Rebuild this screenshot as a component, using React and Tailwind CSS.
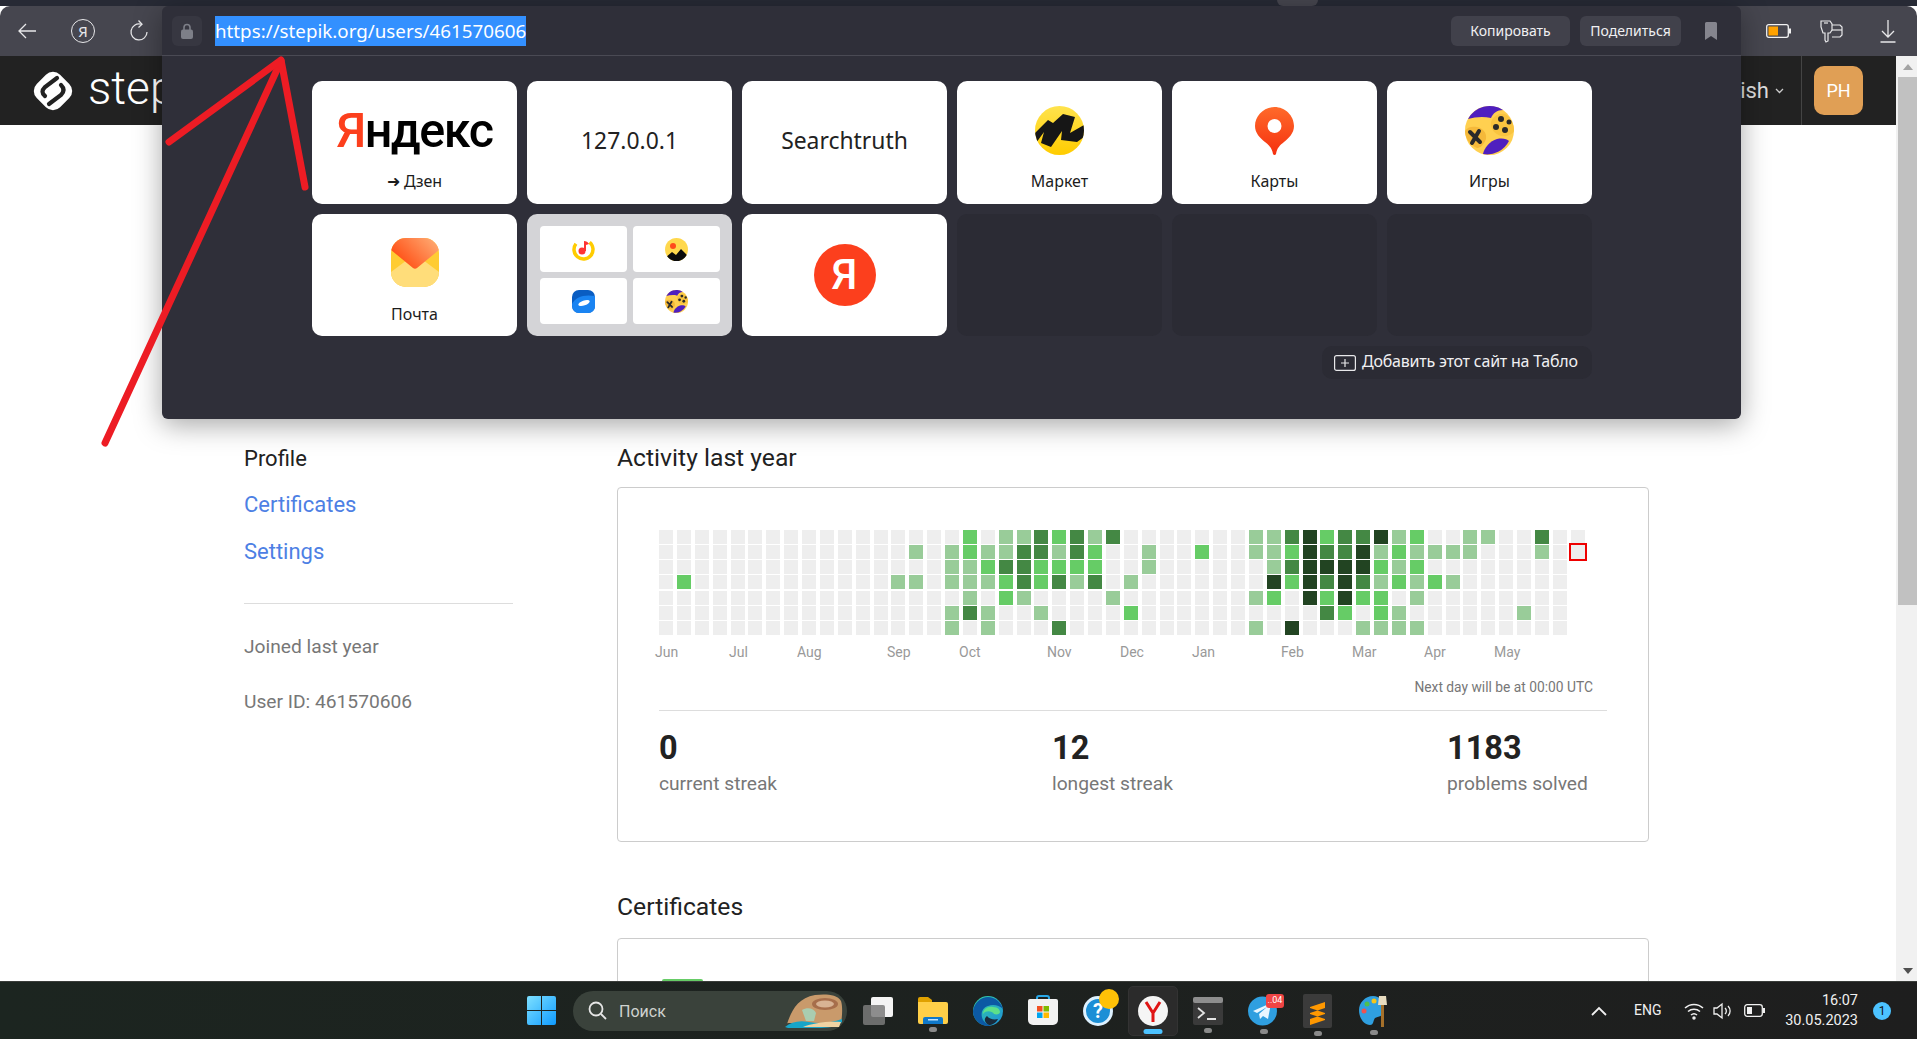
const roboto = "font-['Roboto',sans-serif]";

const LEVELS = ["bg-[#eeeeee]", "bg-[#99cc99]", "bg-[#66cc66]", "bg-[#448844]", "bg-[#224422]"];

// activity per weekday row: column index -> level
const ACTIVITY = [
  { 17: 2, 19: 1, 20: 1, 21: 3, 22: 2, 23: 3, 24: 1, 25: 3, 33: 1, 34: 1, 35: 3, 36: 4, 37: 2, 38: 3, 39: 3, 40: 4, 41: 1, 42: 2, 45: 1, 46: 1, 49: 3 },
  { 14: 1, 16: 1, 17: 2, 18: 1, 19: 1, 20: 3, 21: 3, 22: 1, 23: 3, 24: 2, 27: 1, 30: 2, 33: 1, 34: 1, 35: 2, 36: 4, 37: 3, 38: 3, 39: 4, 40: 1, 41: 2, 42: 1, 43: 1, 44: 1, 45: 1, 49: 1 },
  { 16: 1, 17: 1, 18: 2, 19: 3, 20: 3, 21: 2, 22: 2, 23: 2, 24: 2, 27: 1, 34: 1, 35: 3, 36: 4, 37: 4, 38: 4, 39: 4, 40: 2, 41: 1, 42: 2 },
  { 1: 2, 13: 1, 14: 1, 16: 1, 17: 1, 18: 1, 19: 2, 20: 3, 21: 2, 22: 3, 23: 1, 24: 3, 26: 1, 34: 4, 35: 2, 36: 4, 37: 3, 38: 4, 39: 3, 40: 1, 41: 2, 42: 1, 43: 2, 44: 1 },
  { 17: 1, 19: 2, 20: 1, 25: 1, 33: 1, 34: 2, 36: 4, 37: 2, 38: 4, 39: 2, 40: 2, 42: 1 },
  { 16: 1, 17: 3, 18: 1, 21: 1, 26: 2, 37: 3, 38: 2, 40: 2, 41: 1, 48: 1 },
  { 16: 1, 18: 1, 22: 3, 33: 1, 35: 4, 39: 1, 40: 1, 41: 1, 42: 1 },
];

const MONTHS = [
  ["Jun", "w-[74px]"], ["Jul", "w-[68px]"], ["Aug", "w-[90px]"], ["Sep", "w-[72px]"],
  ["Oct", "w-[88px]"], ["Nov", "w-[73px]"], ["Dec", "w-[72px]"], ["Jan", "w-[89px]"],
  ["Feb", "w-[71px]"], ["Mar", "w-[72px]"], ["Apr", "w-[70px]"], ["May", "w-[60px]"],
];

function Heatmap() {
  const cells = [];
  for (let col = 0; col < 52; col++) {
    for (let row = 0; row < 7; row++) {
      if (col === 51 && row > 1) continue;
      const today = col === 51 && row === 1;
      cells.push(
        <div
          key={col + "-" + row}
          className={`h-[14px] w-[14px] ${LEVELS[ACTIVITY[row][col] || 0]} ${today ? "outline-2 outline-[#ee0000]" : ""}`}
        />
      );
    }
  }
  return (
    <div className="grid h-[105px] w-[926px] grid-flow-col grid-cols-[repeat(52,14px)] grid-rows-[repeat(7,14px)] content-between justify-between">
      {cells}
    </div>
  );
}

function ArrowLeftIcon() {
  return (
    <svg width="20" height="18" viewBox="0 0 20 18" fill="none" stroke="#e8e8ea" strokeWidth="1.3">
      <path d="M19 9H2M9 2 2 9l7 7" />
    </svg>
  );
}

function BrowserYandexIcon() {
  return (
    <div className="flex h-[24px] w-[24px] items-center justify-center rounded-full border border-[#e8e8ea] font-['Noto_Sans',sans-serif] text-[15px] leading-none text-[#e8e8ea]">
      Я
    </div>
  );
}

function ReloadIcon() {
  return (
    <svg width="20" height="24" viewBox="0 0 20 24" fill="none" stroke="#e8e8ea" strokeWidth="1.3">
      <path d="M12 5.2a8 8 0 1 0 6 7.8" />
      <path d="M9.5 1.5 13 5.2 9.5 8.5" />
    </svg>
  );
}

function BatteryOrange() {
  return (
    <svg width="25" height="14" viewBox="0 0 25 14">
      <rect x="0.7" y="0.7" width="21.6" height="12.6" rx="2" fill="none" stroke="#f2f2f2" strokeWidth="1.3" />
      <rect x="2.5" y="2.5" width="9.5" height="9" fill="#ffa200" />
      <rect x="23" y="4.5" width="2" height="5" fill="#f2f2f2" />
    </svg>
  );
}

function ExtensionIcon() {
  return (
    <svg width="23" height="24" viewBox="0 0 23 24" fill="none" stroke="#e8e8ea" strokeWidth="1.2">
      <path d="M1 2h9l2 3v6l-2 3H8v8l-2 1-1-2v-7H3L1 8z" />
      <path d="M4 4h4" />
      <path d="M12 6h8l2 2v8l-2 2h-8" />
      <path d="M12 11h10" />
    </svg>
  );
}

function DownloadIcon() {
  return (
    <svg width="16" height="24" viewBox="0 0 16 24" fill="none" stroke="#e8e8ea" strokeWidth="1.3">
      <path d="M8 1v17M2 12l6 6 6-6M0.5 23h15" />
    </svg>
  );
}

function StepikLogo() {
  return (
    <svg width="46" height="46" viewBox="0 0 46 46">
      <rect x="6.5" y="6.5" width="33" height="33" rx="10" fill="#fff" transform="rotate(45 23 23)" />
      <g fill="none" stroke="#222" strokeWidth="4.200" strokeLinecap="round">
        <path d="M27 10 15 19q-5 5 0 9" />
        <path d="M31 17q5 5 0 10L19 36" />
      </g>
    </svg>
  );
}

function LockIcon() {
  return (
    <svg width="12" height="16" viewBox="0 0 12 16">
      <path d="M3 7V4.5a3 3 0 0 1 6 0V7" fill="none" stroke="#7d7f88" strokeWidth="1.6" />
      <rect x="0" y="6.5" width="12" height="9.5" rx="2" fill="#7d7f88" />
    </svg>
  );
}

function BookmarkIcon() {
  return (
    <svg width="12" height="18" viewBox="0 0 12 18">
      <path d="M0 1.5A1.5 1.5 0 0 1 1.5 0h9A1.5 1.5 0 0 1 12 1.5V18l-6-4-6 4z" fill="#85858e" />
    </svg>
  );
}

function MarketIcon() {
  return (
    <svg width="49" height="49" viewBox="0 0 49 49">
      <defs>
        <linearGradient id="mk" x1="0" y1="0" x2="0" y2="1">
          <stop offset="0" stopColor="#ffe34d" />
          <stop offset="1" stopColor="#ffcc00" />
        </linearGradient>
        <clipPath id="mkc"><circle cx="24.5" cy="24.5" r="24.5" /></clipPath>
      </defs>
      <circle cx="24.5" cy="24.5" r="24.5" fill="url(#mk)" />
      <path
        d="M0 27 13 14l5 3L28 8l12 3-5 16 14-8v12l-7 5-16-2 1-9-11 16-10-4 3-11-8 11-6-6z"
        fill="#161616"
        clipPath="url(#mkc)"
      />
    </svg>
  );
}

function MapsIcon() {
  return (
    <svg width="39" height="48" viewBox="0 0 39 48">
      <defs>
        <linearGradient id="mp" x1="0" y1="0" x2="0" y2="1">
          <stop offset="0" stopColor="#ff6a2a" />
          <stop offset="1" stopColor="#f5300f" />
        </linearGradient>
      </defs>
      <path d="M19.500 0C30 0 39 8.500 39 19c0 7-5 12-10 16-4 3-7 6-8 12-.5 1.300-2.500 1.300-3 0-1-6-4-9-8-12C5 31 0 26 0 19 0 8.500 9 0 19.500 0z" fill="url(#mp)" />
      <circle cx="19.500" cy="19" r="7" fill="#fff" />
    </svg>
  );
}

function GamesIcon({ size = 49 }) {
  return (
    <svg width={size} height={size} viewBox="0 0 49 49">
      <circle cx="24.5" cy="24.5" r="24.500" fill="#ffd050" />
      <path d="M3 13A24.500 24.500 0 0 1 38 4c-6 0-10 3-12 8-8-2-16-1-23 1z" fill="#4f1fbf" />
      <path d="M18 48c1-6 7-13 14-15 6-1 10 0 12 2a24.500 24.500 0 0 1-26 13z" fill="#4f1fbf" />
      <path d="M0 25c2-4 7-5 12-4 6 1 10 6 9 12-2 5-5 9-9 9C5 39 0 32 0 25z" fill="#f5b93a" />
      <path d="M26 16c2-6 8-9 14-8 6 4 9 10 9 17-2 4-8 6-13 5-7-2-11-8-10-14z" fill="#f9c440" />
      <path d="M5 26l10 10M14 25 7 37" stroke="#2a2a2a" strokeWidth="4" strokeLinecap="round" />
      <g fill="#2a2a2a">
        <circle cx="36" cy="13" r="3" />
        <circle cx="31" cy="21" r="3" />
        <circle cx="40" cy="24" r="3" />
        <circle cx="44" cy="16" r="2.500" />
      </g>
    </svg>
  );
}

function MailIcon() {
  return (
    <svg width="48" height="49" viewBox="0 0 48 49">
      <defs>
        <linearGradient id="ml" x1="0" y1="0.6" x2="1" y2="0">
          <stop offset="0" stopColor="#ff4a10" />
          <stop offset="1" stopColor="#ffb27a" />
        </linearGradient>
        <clipPath id="mlc"><rect width="48" height="49" rx="15" /></clipPath>
      </defs>
      <g clipPath="url(#mlc)">
        <rect width="48" height="49" fill="#ffcc33" />
        <path d="M0 49V34l16-12h16l16 12v15z" fill="#ffdd7a" />
        <path d="M0 0h48v12L26 30c-1 1-3 1-4 0L0 12z" fill="url(#ml)" />
      </g>
    </svg>
  );
}

function MusicIcon() {
  return (
    <svg width="23" height="23" viewBox="0 0 23 23">
      <circle cx="11.500" cy="11.500" r="9.500" fill="none" stroke="#ffcc00" strokeWidth="3.500" strokeDasharray="44 16" transform="rotate(-50 11.500 11.500)" />
      <circle cx="10" cy="13" r="3.500" fill="#f33" />
      <path d="M12 13V3c2 0 4 1 5 3l-3 1v6z" fill="#f33" />
    </svg>
  );
}

function PhotoIcon() {
  return (
    <svg width="23" height="23" viewBox="0 0 23 23">
      <defs>
        <clipPath id="ph"><circle cx="11.500" cy="11.500" r="11.500" /></clipPath>
      </defs>
      <g clipPath="url(#ph)">
        <rect width="23" height="23" fill="#ffd84d" />
        <circle cx="8" cy="8" r="3" fill="#ff4a1c" />
        <path d="M0 20l7-6 4 3 5-6 8 8v5H0z" fill="#0c0c0c" />
      </g>
    </svg>
  );
}

function DiskIcon() {
  return (
    <svg width="23" height="23" viewBox="0 0 23 23">
      <rect width="23" height="23" rx="7" fill="#0a5dc2" />
      <path d="M0 14C3 7 12 4 23 6v10c0 4-3 7-7 7H7c-4 0-7-3-7-9z" fill="#1a84f2" />
      <ellipse cx="12" cy="13" rx="6" ry="2.500" transform="rotate(-20 12 13)" fill="#fff" />
    </svg>
  );
}

function Tile({ icon, label }) {
  return (
    <div className="flex h-[123px] flex-col items-center rounded-[10px] bg-white pt-[25px]">
      <div className="flex h-[49px] items-center justify-center">{icon}</div>
      <div className="mt-[16px] text-[16px] leading-5 text-[#1c1c1c]">{label}</div>
    </div>
  );
}

function Popup() {
  const subtile = "flex h-[46px] w-[87px] items-center justify-center rounded-[4px] bg-white";
  return (
    <div className="absolute left-[162px] top-[6px] h-[413px] w-[1579px] rounded-[6px] bg-[#2f2f39] font-['Noto_Sans',sans-serif] shadow-[0_6px_28px_rgba(0,0,0,0.35)]">
      <div className="flex h-[50px] items-center border-b border-[#4a4a54] pl-[10px] pr-[24px]">
        <div className="flex h-[30px] w-[30px] items-center justify-center rounded-[6px] bg-[#373741]">
          <LockIcon />
        </div>
        <div className="ml-[13px] h-[30px] bg-[#3390ff] text-[18.75px] leading-[30px] text-white">
          https://stepik.org/users/461570606
        </div>
        <div className="ml-auto flex h-[30px] w-[119px] items-center justify-center rounded-[6px] bg-[#41414b] text-[14px] text-[#f0f0f2]">
          Копировать
        </div>
        <div className="ml-[10px] flex h-[30px] w-[101px] items-center justify-center rounded-[6px] bg-[#41414b] text-[14px] text-[#f0f0f2]">
          Поделиться
        </div>
        <div className="ml-[24px]">
          <BookmarkIcon />
        </div>
      </div>
      <div className="ml-[150px] mt-[25px] w-[1280px]">
        <div className="grid grid-cols-[repeat(6,205px)] gap-x-[10px] gap-y-[10px]">
          <div className="flex h-[123px] flex-col items-center rounded-[10px] bg-white pt-[19px]">
            <div className="font-['Roboto',sans-serif] text-[48.5px] font-medium leading-[62px] tracking-[-1.5px] text-black">
              <span className="text-[#fc3f1d]">Я</span>ндекс
            </div>
            <div className="mt-[9px] text-[16px] leading-5 text-[#1c1c1c]">➜ Дзен</div>
          </div>
          <div className="flex h-[123px] items-center justify-center rounded-[10px] bg-white pb-[2px] text-[22.9px] text-[#222]">
            127.0.0.1
          </div>
          <div className="flex h-[123px] items-center justify-center rounded-[10px] bg-white pb-[2px] text-[22.9px] text-[#222]">
            Searchtruth
          </div>
          <Tile icon={<MarketIcon />} label="Маркет" />
          <Tile icon={<MapsIcon />} label="Карты" />
          <Tile icon={<GamesIcon />} label="Игры" />

          <div className="flex h-[122px] flex-col items-center rounded-[10px] bg-white pt-[24px]">
            <MailIcon />
            <div className="mt-[17px] text-[16px] leading-5 text-[#1c1c1c]">Почта</div>
          </div>
          <div className="grid h-[122px] grid-cols-[87px_87px] content-center justify-center gap-[6px] rounded-[10px] bg-[#d4d4d7]">
            <div className={subtile}><MusicIcon /></div>
            <div className={subtile}><PhotoIcon /></div>
            <div className={subtile}><DiskIcon /></div>
            <div className={subtile}><GamesIcon size={23} /></div>
          </div>
          <div className="flex h-[122px] items-center justify-center rounded-[10px] bg-white">
            <div className="flex h-[62px] w-[62px] items-center justify-center rounded-full bg-[#fc3f1d] font-['Roboto',sans-serif] text-[42px] font-medium leading-none text-white">
              Я
            </div>
          </div>
          <div className="h-[122px] rounded-[10px] bg-[#2b2b34]" />
          <div className="h-[122px] rounded-[10px] bg-[#2b2b34]" />
          <div className="h-[122px] rounded-[10px] bg-[#2b2b34]" />
        </div>
        <div className="ml-[1010px] mt-[10px] flex h-[33px] w-[270px] items-center gap-[6px] rounded-[10px] bg-[#2b2b34] pb-[3px] pl-[12px] text-[16px] tracking-[-0.22px] text-[#f0f0f2]">
          <svg className="mt-[3px]" width="22" height="16" viewBox="0 0 22 16" fill="none" stroke="#e8e8ea" strokeWidth="1.2">
            <rect x="0.6" y="0.6" width="20.8" height="14.800" rx="2" />
            <path d="M11 4v8M7 8h8" />
          </svg>
          Добавить этот сайт на Табло
        </div>
      </div>
    </div>
  );
}

function Sidebar() {
  return (
    <aside className="mt-[1px] w-[269px] shrink-0 text-[19.2px]">
      <div className="text-[22px] leading-[30px] text-[#222]">Profile</div>
      <div className="mt-[16px] text-[22px] leading-[30px] text-[#4d80e4]">Certificates</div>
      <div className="mt-[17px] text-[22px] leading-[30px] text-[#4d80e4]">Settings</div>
      <div className="mt-[36px] border-t border-[#ddd]" />
      <div className="mt-[30px] leading-[26px] text-[#777]">Joined last year</div>
      <div className="mt-[29px] leading-[26px] text-[#777]">User ID: 461570606</div>
    </aside>
  );
}

function Stat({ value, label, width }) {
  return (
    <div className={width}>
      <div className="text-[32.5px] font-bold leading-[38px] text-[#222]">{value}</div>
      <div className="mt-[5px] text-[19.2px] leading-[24px] text-[#777]">{label}</div>
    </div>
  );
}

function Content() {
  return (
    <main className="ml-[104px] w-[1032px]">
      <h2 className="text-[24.7px] leading-[30px] text-[#222]">Activity last year</h2>
      <div className="mt-[14px] h-[355px] rounded-[4px] border border-[#ccc] pl-[41px] pr-[41px] pt-[42px]">
        <Heatmap />
        <div className="-ml-[4px] mt-[7px] flex text-[14px] leading-[20px] text-[#999]">
          {MONTHS.map(([m, w]) => (
            <span key={m} className={w}>{m}</span>
          ))}
        </div>
        <div className="mr-[14px] mt-[15px] text-right text-[13.8px] leading-[20px] text-[#777]">
          Next day will be at 00:00 UTC
        </div>
        <div className="mt-[13px] border-t border-[#ddd]" />
        <div className="mt-[18px] flex">
          <Stat value="0" label="current streak" width="w-[393px]" />
          <Stat value="12" label="longest streak" width="w-[395px]" />
          <Stat value="1183" label="problems solved" width="w-[160px]" />
        </div>
      </div>
      <h2 className="mt-[50px] text-[24.7px] leading-[30px] text-[#222]">Certificates</h2>
      <div className="mt-[16px] h-[60px] rounded-t-[4px] border border-[#ccc] pl-[44px] pt-[40px]">
        <div className="h-[2px] w-[41px] rounded-t-[2px] bg-[#66cc66]" />
      </div>
    </main>
  );
}

function Scrollbar() {
  return (
    <div className="flex w-[21px] shrink-0 flex-col items-end bg-[#f1f1f1] pl-[2px]">
      <div className="flex h-[21px] w-full items-center justify-center">
        <div className="h-0 w-0 border-x-[5px] border-b-[6px] border-x-transparent border-b-[#a3a3a3]" />
      </div>
      <div className="h-[528px] w-full bg-[#c1c1c1]" />
      <div className="flex-1" />
      <div className="flex h-[21px] w-full items-center justify-center">
        <div className="h-0 w-0 border-x-[5px] border-t-[6px] border-x-transparent border-t-[#505050]" />
      </div>
    </div>
  );
}

function WinLogo() {
  return (
    <svg width="29" height="29" viewBox="0 0 29 29">
      <defs>
        <linearGradient id="wn" x1="0" y1="0" x2="1" y2="1">
          <stop offset="0" stopColor="#7ee0ff" />
          <stop offset="1" stopColor="#0f9bff" />
        </linearGradient>
      </defs>
      <path d="M2 0h12v14H0V2a2 2 0 0 1 2-2zM15 0h12a2 2 0 0 1 2 2v12H15zM0 15h14v14H2a2 2 0 0 1-2-2zM15 15h14v12a2 2 0 0 1-2 2H15z" fill="url(#wn)" />
    </svg>
  );
}

function SearchArt() {
  return (
    <svg width="58" height="34" viewBox="0 0 58 34">
      <path d="M2 30C6 18 12 4 30 1c10-1 22-1 26 6 2 6 1 17 0 22H2z" fill="#c99a6b" />
      <ellipse cx="40" cy="10" rx="13" ry="6" fill="#a76e4b" />
      <ellipse cx="40" cy="10" rx="9" ry="3.500" fill="#d8b394" />
      <path d="M17 16c5-3 12-2 14 3l-2 8h-8z" fill="#a9cdb0" />
      <path d="M0 33c6-5 14-7 24-5 10 2 22 1 33-3v3c-6 5-14 6-25 6H3z" fill="#17a5c9" />
      <path d="M18 33c10-4 24-6 38-5l-2 5z" fill="#efd3a3" />
    </svg>
  );
}

function TaskViewIcon() {
  return (
    <svg width="30" height="28" viewBox="0 0 30 28">
      <rect x="8" y="0" width="22" height="20" rx="2" fill="#f4f4f4" />
      <rect x="0" y="8" width="22" height="20" rx="2" fill="#7a7a7a" fillOpacity="0.85" />
    </svg>
  );
}

function FolderIcon() {
  return (
    <svg width="30" height="27" viewBox="0 0 30 27">
      <path d="M0 2a2 2 0 0 1 2-2h8l4 3v4H0z" fill="#e0a100" />
      <path d="M0 5h28a2 2 0 0 1 2 2v18a2 2 0 0 1-2 2H2a2 2 0 0 1-2-2z" fill="#ffcf48" />
      <path d="M5 27v-5a2 2 0 0 1 2-2h16a2 2 0 0 1 2 2v5z" fill="#0f78c9" />
      <rect x="10" y="22" width="10" height="1.500" fill="#bfe3ff" />
    </svg>
  );
}

function EdgeIcon() {
  return (
    <svg width="30" height="30" viewBox="0 0 30 30">
      <defs>
        <linearGradient id="eg" x1="0" y1="0" x2="1" y2="1">
          <stop offset="0" stopColor="#36d3a0" />
          <stop offset="1" stopColor="#1d8fd8" />
        </linearGradient>
      </defs>
      <circle cx="15" cy="15" r="15" fill="url(#eg)" />
      <path d="M0 15C1 7 8 1 15 1c7 0 13 5 15 12-4-4-10-5-15-3-6 2-8 8-5 14 2 3 5 5 8 6C8 31 0 24 0 15z" fill="#0c59a4" />
      <path d="M10 18c0-5 5-8 10-7 5 0 7 3 7 5s-3 3-6 2c-2-3-8-4-11 0z" fill="#5ce08a" />
      <path d="M14 20c2 3 7 4 11 3-2 4-6 6-9 6-4-2-6-6-2-9z" fill="#1a2a3a" />
    </svg>
  );
}

function StoreIcon() {
  return (
    <svg width="30" height="31" viewBox="0 0 30 31">
      <path d="M9 5V3a2 2 0 0 1 2-2h8a2 2 0 0 1 2 2v2" fill="none" stroke="#29a8e8" strokeWidth="2" />
      <path d="M0 6a2 2 0 0 1 2-2h26a2 2 0 0 1 2 2v19a5 5 0 0 1-5 5H5a5 5 0 0 1-5-5z" fill="#f2f2f2" />
      <rect x="9" y="11" width="5.500" height="5.500" fill="#f25022" />
      <rect x="15.500" y="11" width="5.500" height="5.500" fill="#7fba00" />
      <rect x="9" y="17.500" width="5.500" height="5.500" fill="#00a4ef" />
      <rect x="15.500" y="17.500" width="5.500" height="5.500" fill="#ffb900" />
    </svg>
  );
}

function HelpIcon() {
  return (
    <div className="relative h-[30px] w-[30px]">
      <div className="flex h-[30px] w-[30px] items-center justify-center rounded-full border-[3px] border-[#ddf1ff] bg-[#1b8fd6] text-[20px] font-bold leading-none text-white">
        ?
      </div>
      <div className="absolute -right-[6px] -top-[7px] h-[20px] w-[20px] rounded-full bg-[#ffc107]" />
    </div>
  );
}

function YandexBrowserIcon() {
  return (
    <svg width="30" height="30" viewBox="0 0 30 30">
      <circle cx="15" cy="15" r="15" fill="#f5f5f5" />
      <path d="M8 6l7 11 7-11M15 16v10" fill="none" stroke="#e01515" strokeWidth="3" />
    </svg>
  );
}

function TerminalIcon() {
  return (
    <svg width="30" height="28" viewBox="0 0 30 28">
      <rect width="30" height="28" rx="2" fill="#3a3a3a" />
      <rect width="30" height="6" rx="2" fill="#8e8e8e" />
      <path d="M5 11l6 5-6 5" fill="none" stroke="#e4e4e4" strokeWidth="1.800" />
      <path d="M14 22h9" stroke="#e4e4e4" strokeWidth="2" />
    </svg>
  );
}

function TelegramIcon() {
  return (
    <div className="relative -ml-[2px] h-[30px] w-[29px]">
      <svg width="29" height="30" viewBox="0 0 29 30">
        <circle cx="14.500" cy="15" r="14.500" fill="#2f9fe0" />
        <path d="M5 15l18-8-3 16-5-3-3 3-1-5 8-7-10 6z" fill="#e8f6ff" />
      </svg>
      <div className="absolute -right-[7px] -top-[2px] flex h-[14px] w-[18px] items-center justify-center rounded-[3px] bg-[#ef4444] font-['Roboto',sans-serif] text-[9px] leading-none text-white">
        ..04
      </div>
    </div>
  );
}

function SublimeIcon() {
  return (
    <svg width="29" height="34" viewBox="0 0 29 34">
      <rect width="29" height="34" rx="2" fill="#3b3b3b" />
      <path d="M7 13 22 8v6l-15 5zM7 20l15 5v-6L7 14zM7 25l15-5v6L7 31z" fill="#ff9800" />
    </svg>
  );
}

function PaletteIcon() {
  return (
    <svg width="30" height="32" viewBox="0 0 30 32">
      <path d="M14 1C6 1 0 8 0 15c0 8 5 15 11 15 4 0 3-5 5-7 3-2 9-1 9-8C25 7 21 1 14 1z" fill="#2f9fe0" />
      <circle cx="8" cy="9" r="2.500" fill="#4fbf4f" />
      <circle cx="15" cy="6" r="2.500" fill="#f5c518" />
      <circle cx="5" cy="16" r="2.500" fill="#ef5350" />
      <rect x="22" y="9" width="3" height="23" fill="#a5702a" />
      <path d="M20 1h7l1 9h-9z" fill="#e8dcc0" />
    </svg>
  );
}

function TaskSlot({ children, width, gap, dot }) {
  return (
    <div className={`relative flex items-center justify-center ${width} ${gap}`}>
      {children}
      {dot && <div className="absolute -bottom-[8px] left-1/2 h-[5px] w-[8px] -translate-x-1/2 rounded-full bg-[#8a8a8a]" />}
    </div>
  );
}

function Taskbar() {
  return (
    <div className="flex h-[58px] shrink-0 items-center border-t border-[#3a3d3a] bg-gradient-to-r from-[#1c2520] to-[#1e1e1e] pl-[527px] pr-[26px] font-['Roboto',sans-serif] text-[#f0f0f0]">
      <div className="mr-[17px]"><WinLogo /></div>
      <div className="mr-[16px] flex h-[40px] w-[274px] items-center rounded-full bg-[#3a423b] pl-[15px] pr-[4px]">
        <svg width="19" height="19" viewBox="0 0 19 19" fill="none" stroke="#e6e6e6" strokeWidth="1.800">
          <circle cx="8" cy="8" r="6.500" />
          <path d="M13 13l5 5" />
        </svg>
        <span className="ml-[12px] mt-[2px] text-[16px] text-[#cfd2cf]">Поиск</span>
        <div className="ml-auto"><SearchArt /></div>
      </div>
      <TaskSlot width="w-[30px]" gap="mr-[25px]"><TaskViewIcon /></TaskSlot>
      <TaskSlot width="w-[30px]" gap="mr-[25px]" dot><FolderIcon /></TaskSlot>
      <TaskSlot width="w-[30px]" gap="mr-[25px]"><EdgeIcon /></TaskSlot>
      <TaskSlot width="w-[30px]" gap="mr-[25px]"><StoreIcon /></TaskSlot>
      <TaskSlot width="w-[30px]" gap="mr-[15px]"><HelpIcon /></TaskSlot>
      <div className="relative mr-[15px] flex h-[50px] w-[50px] items-center justify-center rounded-[5px] border border-[#333] bg-[#2b2b2b]">
        <YandexBrowserIcon />
        <div className="absolute bottom-[1px] left-1/2 h-[5px] w-[19px] -translate-x-1/2 rounded-full bg-[#4cc2ff]" />
      </div>
      <TaskSlot width="w-[30px]" gap="mr-[26px]" dot><TerminalIcon /></TaskSlot>
      <TaskSlot width="w-[29px]" gap="mr-[25px]" dot><TelegramIcon /></TaskSlot>
      <TaskSlot width="w-[29px]" gap="mr-[27px]" dot><SublimeIcon /></TaskSlot>
      <TaskSlot width="w-[30px]" gap="" dot><PaletteIcon /></TaskSlot>

      <div className="ml-auto flex items-center">
        <svg width="16" height="10" viewBox="0 0 16 10" fill="none" stroke="#f0f0f0" strokeWidth="1.800">
          <path d="M1 9l7-7 7 7" />
        </svg>
        <span className="ml-[27px] w-[28px] text-[14px]">ENG</span>
        <svg className="ml-[22px]" width="20" height="18" viewBox="0 0 20 18" fill="none" stroke="#f0f0f0" strokeWidth="1.500">
          <path d="M1 6a13 13 0 0 1 18 0M4 9.500a9 9 0 0 1 12 0M7 13a4.500 4.500 0 0 1 6 0" />
          <circle cx="10" cy="16" r="1" fill="#f0f0f0" />
        </svg>
        <svg className="ml-[9px]" width="20" height="18" viewBox="0 0 20 18" fill="none" stroke="#f0f0f0" strokeWidth="1.300">
          <path d="M1 6h3l5-4v14l-5-4H1z" />
          <path d="M12 6a4 4 0 0 1 0 6M15 4a7 7 0 0 1 0 10" />
        </svg>
        <svg className="ml-[11px]" width="21" height="13" viewBox="0 0 21 13">
          <rect x="0.700" y="0.700" width="17.600" height="11.600" rx="2.500" fill="none" stroke="#f0f0f0" strokeWidth="1.300" />
          <rect x="3" y="3" width="5" height="7" fill="#f0f0f0" />
          <rect x="19" y="4" width="2" height="5" fill="#f0f0f0" />
        </svg>
        <div className="ml-[17px] w-[76px] whitespace-nowrap text-right text-[14.5px] leading-[20px]">
          <div>16:07</div>
          <div>30.05.2023</div>
        </div>
        <div className="ml-[15px] flex h-[18px] w-[18px] items-center justify-center rounded-full bg-[#4cc2ff] text-[12px] text-[#111]">
          1
        </div>
      </div>
    </div>
  );
}

function RedArrow() {
  return (
    <svg className="pointer-events-none absolute left-0 top-0" width="400" height="460" viewBox="0 0 400 460" fill="none" stroke="#ed1c24" strokeWidth="7" strokeLinecap="round" strokeLinejoin="round">
      <path d="M105 443 281 61" />
      <path d="M169 142 281 60l24 127" />
    </svg>
  );
}

export default function App() {
  return (
    <div className={`relative flex h-[1039px] w-[1917px] flex-col overflow-hidden bg-white ${roboto}`}>
      <div className="flex h-[6px] shrink-0 justify-end bg-[#272a35] pr-[599px]">
        <div className="h-[6px] w-[41px] rounded-b-[8px] bg-[#46464f]" />
      </div>
      <div className="flex h-[50px] shrink-0 items-center rounded-t-[10px] bg-[#46464f] pl-[17px] pr-[21px]">
        <ArrowLeftIcon />
        <div className="ml-[34px]"><BrowserYandexIcon /></div>
        <div className="ml-[34px]"><ReloadIcon /></div>
        <div className="ml-auto"><BatteryOrange /></div>
        <div className="ml-[29px]"><ExtensionIcon /></div>
        <div className="ml-[37px]"><DownloadIcon /></div>
      </div>
      <div className="flex min-h-0 flex-1">
        <div className="min-w-0 flex-1 overflow-hidden">
          <header className="flex h-[69px] items-center bg-[#222] pl-[30px] pr-[33px] text-white">
            <StepikLogo />
            <span className="-mt-[6px] ml-[12px] text-[46px] font-light leading-none">stepik</span>
            <span className="ml-auto text-[22px] text-[#ddd]">English</span>
            <svg className="ml-[6px]" width="9" height="6" viewBox="0 0 9 6" fill="none" stroke="#ccc" strokeWidth="1.300">
              <path d="M1 1l3.500 3.500L8 1" />
            </svg>
            <div className="ml-[17px] h-full border-l border-[#444]" />
            <div className="ml-[12px] flex h-[49px] w-[49px] items-center justify-center rounded-[10px] bg-[#e09f55] text-[18px] text-white">
              PH
            </div>
          </header>
          <div className="flex pl-[244px] pt-[318px]">
            <Sidebar />
            <Content />
          </div>
        </div>
        <Scrollbar />
      </div>
      <Taskbar />
      <Popup />
      <RedArrow />
    </div>
  );
}
